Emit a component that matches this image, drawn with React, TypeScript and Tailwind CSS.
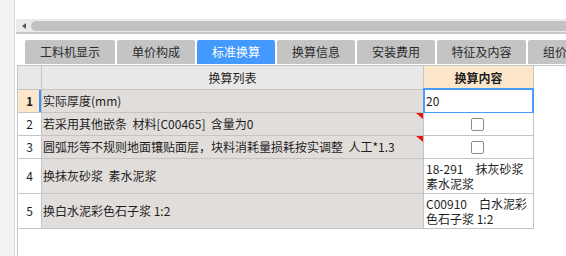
import React from 'react';

interface ConvRow {
  no: number;
  name: string;
  kind: 'input' | 'check' | 'text';
  value?: string;
  lines?: string[];
  flag?: boolean;
  tall?: boolean;
}

const tabs = [
  { label: '工料机显示', w: 'w-[90px]' },
  { label: '单价构成', w: 'w-[78px]' },
  { label: '标准换算', w: 'w-[78px]', active: true },
  { label: '换算信息', w: 'w-[78px]' },
  { label: '安装费用', w: 'w-[78px]' },
  { label: '特征及内容', w: 'w-[89px]' },
  { label: '组价方案', w: 'w-[78px]' },
];

const rows: ConvRow[] = [
  { no: 1, name: '实际厚度(mm)', kind: 'input', value: '20' },
  { no: 2, name: '若采用其他嵌条  材料[C00465]  含量为0', kind: 'check', flag: true },
  { no: 3, name: '圆弧形等不规则地面镶贴面层，块料消耗量损耗按实调整  人工*1.3', kind: 'check', flag: true },
  { no: 4, name: '换抹灰砂浆  素水泥浆', kind: 'text', lines: ['18-291\u3000抹灰砂浆', '素水泥浆'], tall: true },
  { no: 5, name: '换白水泥彩色石子浆 1:2', kind: 'text', lines: ['C00910\u3000白水泥彩', '色石子浆 1:2'], tall: true },
];

const RedFlag = () => (
  <svg className="absolute top-0 right-0" width="7" height="6" viewBox="0 0 7 6">
    <polygon points="0,0 7,0 7,6" fill="#ee1111" />
  </svg>
);

const App: React.FC = () => {
  return (
    <div className="w-[566px] h-[256px] overflow-hidden bg-white flex font-['Noto_Sans_CJK_SC','Liberation_Sans',sans-serif] text-[#1e1e1e]">
      {/* left gutter */}
      <div className="w-[15px] h-full bg-[#f3f3f3] border-r border-[#d6d6d6] shrink-0" />

      <div className="flex-1 flex flex-col min-w-0">
        <div className="h-[19px]" />

        {/* horizontal scrollbar */}
        <div className="h-[13px] ml-[1px] bg-[#ebebeb] flex items-start">
          <div className="mt-[4px] ml-[6px] w-0 h-0 border-y-[3px] border-y-transparent border-r-[4px] border-r-[#5a5a5a]" />
          <div className="mt-[2px] ml-[5px] flex-1 h-[10px] rounded-l-full bg-[#c2c2c2]" />
        </div>
        <div className="h-[2px] ml-[1px] bg-[#c8c8c8]" />
        <div className="h-[6px]" />

        {/* tabs */}
        <div className="h-[24px] ml-[10px] flex gap-[2px] whitespace-nowrap overflow-hidden">
          {tabs.map((t) => (
            <div
              key={t.label}
              className={`${t.w} shrink-0 h-full rounded-t-[2px] flex items-center justify-center text-[12px] ${
                t.active ? 'bg-[#4399fd] text-white' : 'bg-[#c4c4c4] text-[#2a2a2a]'
              }`}
            >
              {t.label}
            </div>
          ))}
        </div>

        {/* grid area */}
        <div className="flex-1 mt-[1px] ml-[2px] border-l border-[#c4c4c4]">
          <div className="grid grid-cols-[24px_382px_110px] border-t border-[#c4c4c4] text-[12px]">
            {/* header */}
            <div className="h-[24px] bg-[#e8e8e8] border-r border-b border-[#c4c4c4]" />
            <div className="h-[24px] bg-[#e8e8e8] border-r border-b border-[#c4c4c4] flex items-center justify-center">
              换算列表
            </div>
            <div className="h-[24px] bg-[#fde7cb] border-r border-b border-[#c4c4c4] flex items-center justify-center font-bold">
              换算内容
            </div>

            {rows.map((r) => {
              const h = r.tall ? 'h-[35px]' : 'h-[23px]';
              const first = r.no === 1;
              return (
                <React.Fragment key={r.no}>
                  <div
                    className={`${h} relative border-r border-b border-[#c4c4c4] flex items-center justify-center ${
                      first ? 'bg-[#fde7cb] font-bold' : 'bg-white'
                    }`}
                  >
                    {r.no}
                    {first && <div className="absolute right-0 top-0 bottom-0 w-[2px] bg-[#3d8ff5]" />}
                  </div>
                  <div className={`${h} relative bg-[#e1dddb] border-r border-b border-[#c4c4c4] flex items-center pl-[1px] whitespace-pre`}>
                    {r.name}
                    {r.flag && <RedFlag />}
                  </div>
                  <div className={`${h} relative bg-white border-r border-b border-[#c4c4c4] flex items-center`}>
                    {r.kind === 'input' && (
                      <>
                        <span className="pl-[2px]">{r.value}</span>
                        <div className="absolute -left-[1px] -top-[2px] -right-[1px] -bottom-[2px] border-2 border-[#4a9cfc]" />
                      </>
                    )}
                    {r.kind === 'check' && (
                      <div className="mx-auto -translate-x-[1px] w-[13px] h-[13px] rounded-[2px] border border-[#8c8c8c] bg-white" />
                    )}
                    {r.kind === 'text' && (
                      <div className="pl-[2px] leading-[15px] whitespace-pre">
                        {r.lines?.map((l) => (
                          <div key={l}>{l}</div>
                        ))}
                      </div>
                    )}
                  </div>
                </React.Fragment>
              );
            })}
          </div>
        </div>
      </div>
    </div>
  );
};

export default App;
